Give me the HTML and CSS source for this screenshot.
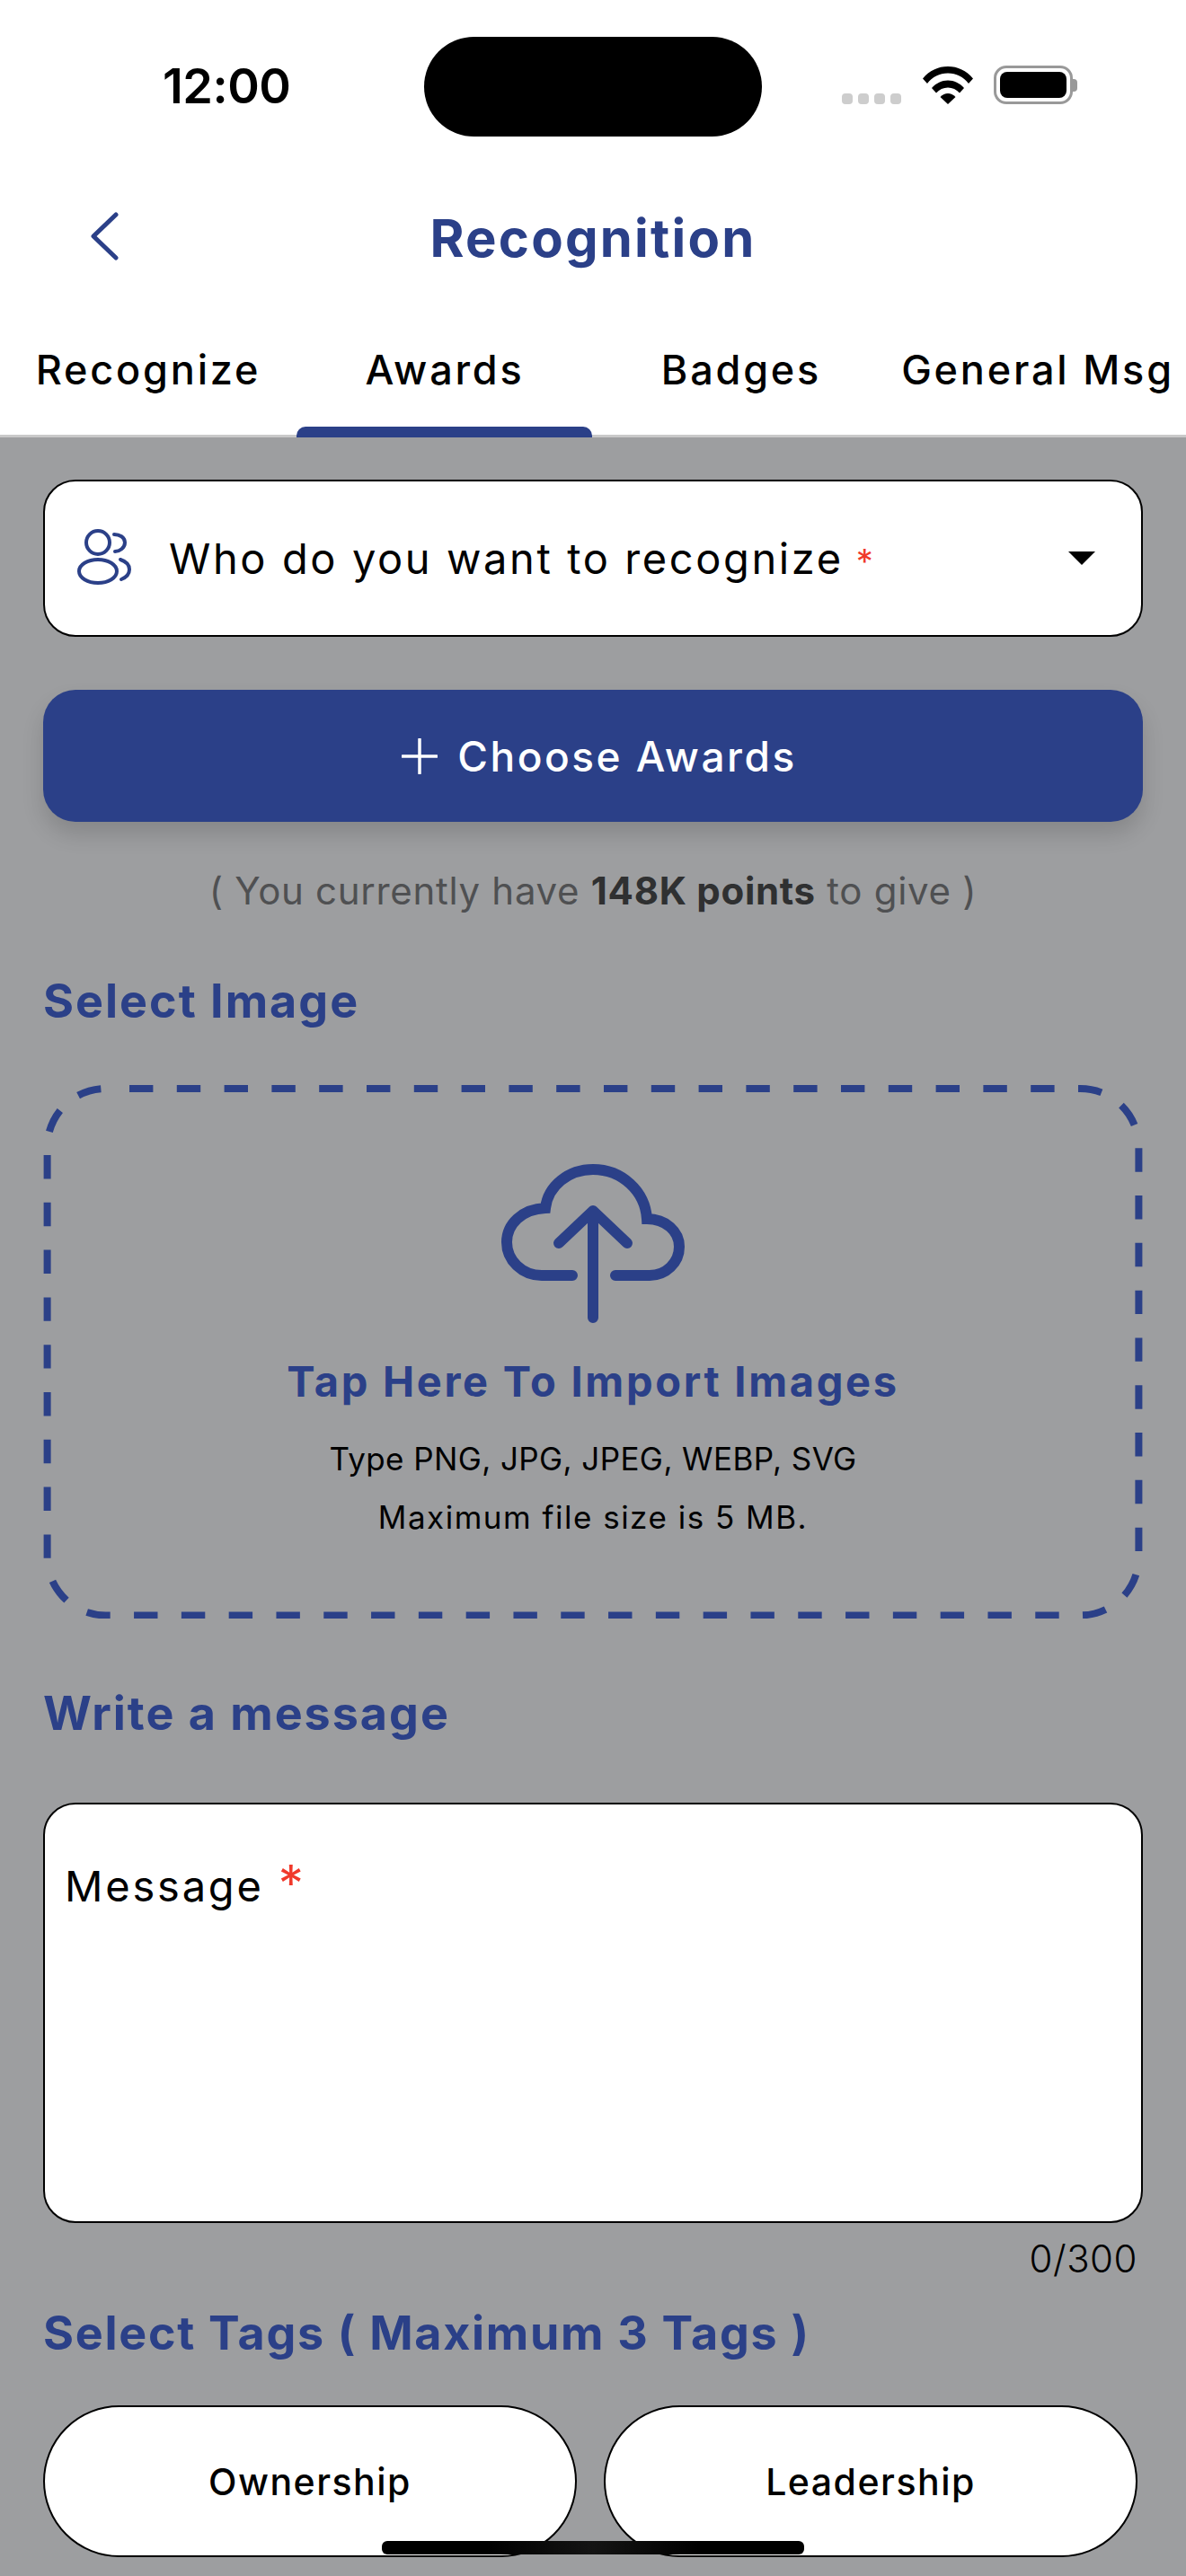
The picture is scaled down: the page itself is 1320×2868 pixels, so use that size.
FILE: index.html
```html
<!DOCTYPE html>
<html lang="en">
  <head>
    <meta charset="UTF-8" />
    <meta name="viewport" content="width=device-width, initial-scale=1.0" />
    <title>Recognition</title>
    <link rel="stylesheet" href="styles.css">
  </head>
  <body>
    <div class="phone">
      <header class="top">
        <div class="status-bar">
          <span class="time">12:00</span>
          <div class="island"></div>
          <div class="status-icons">
            <div class="signal"><i></i><i></i><i></i><i></i></div>
            <svg class="wifi" width="58" height="43" viewBox="0 0 58 43">
              <path d="M1 14.500C8.500 5.500 18 1 29 1s20.500 4.500 28 13.500l-5 5.500C46 12.500 38.500 8.500 29 8.500S12 12.500 6 20z" />
              <path d="M11 25C16 19.500 22 16.500 29 16.500S42 19.500 47 25l-5 5.500C38.500 26.500 34 24.500 29 24.500S19.500 26.500 16 30.500z" />
              <path d="M20.500 35C23 32.500 26 31 29 31s6 1.500 8.500 4L29 43z" />
            </svg>
            <div class="battery"><div class="battery-fill"></div></div>
            <div class="battery-nub"></div>
          </div>
        </div>

        <div class="title-row">
          <svg class="back" width="40" height="56" viewBox="0 0 40 56">
            <path d="M31 3L6 27l25 24" fill="none" stroke="#2b4088" stroke-width="5" stroke-linecap="round" stroke-linejoin="round" />
          </svg>
          <h1>Recognition</h1>
        </div>

        <nav class="tabs">
          <a class="tab">Recognize</a>
          <a class="tab active">Awards</a>
          <a class="tab">Badges</a>
          <a class="tab">General Msg</a>
        </nav>
      </header>

      <main class="content">
        <div class="select-box">
          <svg class="people" width="64" height="66" viewBox="0 0 64 66">
            <ellipse cx="26" cy="15" rx="13" ry="13" />
            <ellipse cx="26" cy="47" rx="21" ry="13" />
            <path d="M44 6c6 0 12 3 12 9s-6 10-11 10" stroke-linecap="round" />
            <path d="M51 34c6 2 10 6 10 11s-4 9-9 11" stroke-linecap="round" />
          </svg>
          <span class="select-label">Who do you want to recognize<span class="req-small">*</span></span>
          <span class="caret"></span>
        </div>

        <button class="choose-btn">
          <svg width="40" height="40" viewBox="0 0 40 40">
            <path d="M20 1v38M1 20h38" stroke="#fff" stroke-width="3.500" stroke-linecap="round" />
          </svg>
          <span>Choose Awards</span>
        </button>

        <p class="points">( You currently have <b>148K points</b> to give )</p>

        <h2 class="section-title title-image">Select Image</h2>

        <div class="upload-box">
          <svg class="dashes" width="1224" height="594" viewBox="0 0 1224 594">
            <rect x="4.600" y="4" width="1214.800" height="586.400" rx="65" ry="65" />
          </svg>
          <svg class="cloud" width="206" height="178" viewBox="0 0 206 178">
            <path d="M80 124H46C24 124 7 107 7 87 7 67 24 50 50 49 53 24 76 6 103 6c32 0 58 24 60 55 21 0 36 14 36 31 0 18-15 32-33 32h-38" />
            <path class="cloud-arrow" d="M103 171V52M65 88l38-36 38 36" />
          </svg>
          <div class="upload-title">Tap Here To Import Images</div>
          <div class="upload-note note-type">Type PNG, JPG, JPEG, WEBP, SVG</div>
          <div class="upload-note note-size">Maximum file size is 5 MB.</div>
        </div>

        <h2 class="section-title title-message">Write a message</h2>

        <div class="message-box">Message <span class="req">*</span></div>
        <div class="counter">0/300</div>

        <h2 class="section-title title-tags">Select Tags ( Maximum 3 Tags )</h2>

        <div class="tag-row">
          <div class="tag">Ownership</div>
          <div class="tag">Leadership</div>
        </div>
      </main>

      <div class="home-bar"></div>
    </div>
  </body>
</html>
```

FILE: styles.css
```css
/* Base Styles */
* {
  box-sizing: border-box;
  margin: 0;
  padding: 0;
}

body {
  font-family: "Inter", "Liberation Sans", sans-serif;
  background-color: #9d9ea0;
  color: #000;
}

.phone {
  width: 1320px;
  height: 2868px;
  position: relative;
  overflow: hidden;
}

/* Header */
.top {
  height: 487px;
  background-color: #fff;
  border-bottom: 3px solid #c9c9c9;
}

.status-bar {
  height: 152px;
  padding-top: 41px;
  display: flex;
  align-items: flex-start;
}

.time {
  width: 139px;
  margin-left: 181px;
  margin-top: 22px;
  font-size: 54px;
  line-height: 66px;
  font-weight: 600;
  letter-spacing: -0.5px;
}

.island {
  width: 376px;
  height: 111px;
  margin-left: 152px;
  border-radius: 56px;
  background-color: #000;
}

.status-icons {
  display: flex;
  align-items: flex-end;
  margin-left: 89px;
  margin-top: 32px;
  height: 43px;
}

.signal {
  display: flex;
  gap: 6px;
}

.signal i {
  width: 12px;
  height: 12px;
  border-radius: 4px;
  background-color: #cdcdcd;
}

.wifi {
  margin-left: 23px;
  fill: #000;
}

.battery {
  width: 88px;
  height: 43px;
  margin-left: 22px;
  padding: 4px;
  border: 3px solid #999;
  border-radius: 14px;
}

.battery-fill {
  width: 100%;
  height: 100%;
  border-radius: 8px;
  background-color: #000;
}

.battery-nub {
  width: 5px;
  height: 14px;
  margin-bottom: 14px;
  border-radius: 0 4px 4px 0;
  background-color: #999;
}

.title-row {
  height: 110px;
  margin-top: 58px;
  display: grid;
  grid-template-columns: 1fr auto 1fr;
  align-items: center;
}

.back {
  margin: 26px 0 0 98px;
  align-self: start;
}

.title-row h1 {
  font-size: 58px;
  font-weight: 650;
  color: #2b4088;
  letter-spacing: 2.200px;
}

/* Tabs */
.tabs {
  height: 164px;
  display: grid;
  grid-template-columns: repeat(4, 330px);
}

.tab {
  position: relative;
  padding-top: 64px;
  text-align: center;
  font-size: 45px;
  line-height: 56px;
  font-weight: 500;
  letter-spacing: 2.800px;
  white-space: nowrap;
}

.tab.active::after {
  content: "";
  position: absolute;
  left: 0;
  right: 1px;
  bottom: -3px;
  height: 12px;
  border-radius: 10px 10px 0 0;
  background-color: #2b4088;
}

/* Content */
.content {
  padding: 47px 48px 0;
}

.select-box {
  height: 175px;
  display: flex;
  align-items: center;
  padding: 0 51px 0 33px;
  background-color: #fff;
  border: 2.500px solid #000;
  border-radius: 36px;
}

.people {
  fill: none;
  stroke: #2b4088;
  stroke-width: 4;
  flex-shrink: 0;
}

.select-label {
  margin-left: 41px;
  font-size: 47px;
  letter-spacing: 2.600px;
  flex: 1;
}

.req-small {
  margin-left: 14px;
  color: #f0392b;
  font-size: 38px;
}

.caret {
  width: 0;
  height: 0;
  border-left: 15px solid transparent;
  border-right: 15px solid transparent;
  border-top: 15px solid #000;
}

.choose-btn {
  width: 100%;
  height: 147px;
  margin-top: 59px;
  padding-left: 14px;
  display: flex;
  align-items: center;
  justify-content: center;
  gap: 22px;
  font-family: inherit;
  font-size: 46px;
  font-weight: 500;
  letter-spacing: 2.500px;
  color: #fff;
  background-color: #2b4088;
  border: none;
  border-radius: 36px;
  box-shadow: 0 14px 24px rgba(0, 0, 0, 0.14);
}

.points {
  margin-top: 50px;
  text-align: center;
  font-size: 42px;
  line-height: 54px;
  letter-spacing: 0.700px;
  color: #4f5052;
}

.points b {
  font-weight: 700;
  color: #2f3031;
}

.section-title {
  font-size: 52px;
  line-height: 66px;
  font-weight: 650;
  letter-spacing: 2px;
  color: #2b4088;
}

.title-image { margin-top: 63px; }

.upload-box {
  position: relative;
  height: 594px;
  margin-top: 60px;
  display: flex;
  flex-direction: column;
  align-items: center;
  padding-top: 88px;
}

.dashes {
  position: absolute;
  left: 0;
  top: 0;
  fill: none;
  stroke: #2b4088;
  stroke-width: 8;
  stroke-dasharray: 26.400 26.400;
  stroke-dashoffset: -26.400;
}

.cloud {
  fill: none;
  stroke: #2b4088;
  stroke-width: 12;
  stroke-linecap: round;
  stroke-linejoin: miter;
}

.cloud-arrow {
  stroke-linejoin: round;
}

.upload-title {
  margin-top: 34px;
  font-size: 47px;
  line-height: 60px;
  font-weight: 650;
  letter-spacing: 2.700px;
  color: #2b4088;
}

.upload-note {
  font-size: 35px;
  line-height: 65px;
}

.note-type {
  margin-top: 24px;
  letter-spacing: 0.400px;
}

.note-size {
  letter-spacing: 1.500px;
}

.title-message { margin-top: 73px; }

.message-box {
  height: 468px;
  margin-top: 66px;
  padding: 61px 22px 0;
  font-size: 47px;
  line-height: 60px;
  letter-spacing: 2.800px;
  background-color: #fff;
  border: 2.500px solid #000;
  border-radius: 36px;
}

.req {
  color: #f0392b;
  font-size: 56px;
  line-height: 0;
}

.counter {
  margin-top: 16px;
  padding-right: 6px;
  text-align: right;
  font-size: 42px;
  line-height: 48px;
  font-weight: 300;
  letter-spacing: 0.500px;
}

.title-tags {
  margin-top: 26px;
  letter-spacing: 1.700px;
}

.tag-row {
  display: flex;
  gap: 30px;
  margin-top: 47px;
}

.tag {
  width: 594px;
  height: 169px;
  display: flex;
  align-items: center;
  justify-content: center;
  font-size: 41px;
  font-weight: 500;
  letter-spacing: 1.500px;
  background-color: #fff;
  border: 2.500px solid #000;
  border-radius: 85px;
}

/* Home indicator */
.home-bar {
  position: absolute;
  left: 425px;
  top: 2829px;
  width: 470px;
  height: 15px;
  border-radius: 6px;
  background: linear-gradient(to right, #000 25%, #141414 50%, #000 75%);
}
```
